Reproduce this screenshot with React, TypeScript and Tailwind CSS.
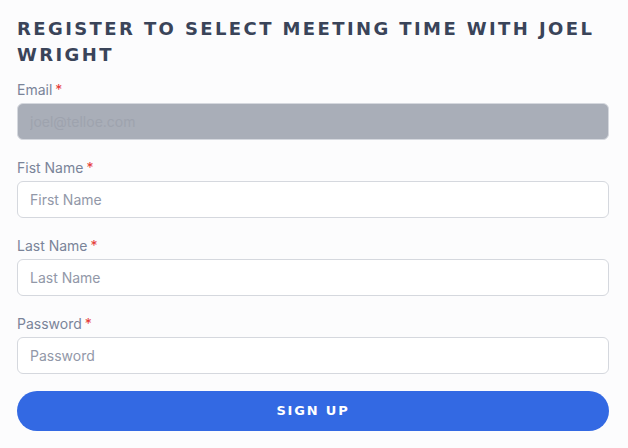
import React from "react";

function Field({ label, placeholder, disabled, type = "text" }: { label: string; placeholder: string; disabled?: boolean; type?: string }) {
  return (
    <div className="flex flex-col">
      <label className="text-[14px] leading-[20px] text-[#7a8499] mb-[3px]">
        {label}
        <span className="text-[#e53935] ml-[3px]">*</span>
      </label>
      <input
        type={type}
        disabled={disabled}
        placeholder={placeholder}
        className={
          disabled
            ? "h-[37px] w-full rounded-[6px] border border-[#d5d8de] bg-[#a9aeb8] px-[12px] text-[14px] placeholder:text-[#9ea3ae] outline-none"
            : "h-[37px] w-full rounded-[6px] border border-[#d5d8de] bg-white px-[12px] text-[14px] placeholder:text-[#9298a8] outline-none"
        }
      />
    </div>
  );
}

export default function App() {
  return (
    <div className="min-h-[448px] w-[628px] bg-[#fcfcfd] px-[17px] pt-[16px]" style={{ fontFamily: "Inter, 'Noto Sans', sans-serif" }}>
      <h1
        className="text-[18px] leading-[26px] font-bold tracking-[2.4px] text-[#3a4459] uppercase mb-[12px]"
        style={{ fontFamily: "'DejaVu Sans', sans-serif" }}
      >
        Register to select meeting time with Joel Wright
      </h1>
      <div className="flex flex-col gap-[18px] w-[592px]">
        <Field label="Email" placeholder="joel@telloe.com" disabled />
        <Field label="Fist Name" placeholder="First Name" />
        <Field label="Last Name" placeholder="Last Name" />
        <Field label="Password" placeholder="Password" type="password" />
      </div>
      <button className="mt-[17px] h-[40px] w-[592px] rounded-full bg-[#3369e3] text-white text-[13px] font-bold tracking-[0.14em]" style={{ fontFamily: "'DejaVu Sans', sans-serif" }}>
        SIGN UP
      </button>
    </div>
  );
}
